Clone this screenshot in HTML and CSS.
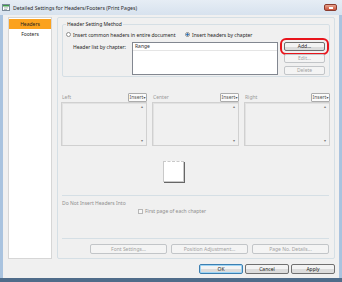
FILE: index.html
```html
<!DOCTYPE html>
<html>
<head>
    <meta charset="UTF-8">
    <title>Detailed Settings for Headers/Footers (Print Pages)</title>
    <link rel="stylesheet" href="styles.css">
</head>
<body>
    <div class="window">
        <div class="titlebar">
            <svg class="app-icon" width="8" height="7" viewBox="0 0 8 7">
                <rect x="0.5" y="0.5" width="7" height="6" fill="#fff" stroke="#7a8a99"/>
                <rect x="1" y="1" width="6" height="1.5" fill="#3f9a4a"/>
                <rect x="2" y="3.5" width="4" height="0.8" fill="#9aa"/>
                <rect x="2" y="5" width="3" height="0.8" fill="#9aa"/>
            </svg>
            <span class="title">Detailed Settings for Headers/Footers (Print Pages)</span>
            <span class="close"><span></span></span>
        </div>
        <div class="frame">
            <div class="client">
                <div class="main">
                    <ul class="nav">
                        <li class="active">Headers</li>
                        <li>Footers</li>
                    </ul>

                    <div class="panel">
                        <fieldset class="method">
                            <legend>Header Setting Method</legend>
                            <div class="radios">
                                <label class="radio"><span class="dot"></span>Insert common headers in entire document</label>
                                <label class="radio checked"><span class="dot"></span>Insert headers by chapter</label>
                            </div>
                            <div class="chapter-row">
                                <span class="chapter-label">Header list by chapter:</span>
                                <div class="listbox">
                                    <div class="list-head">Range</div>
                                </div>
                                <div class="side-buttons">
                                    <button class="btn marked">Add...</button>
                                    <button class="btn" disabled>Edit...</button>
                                    <button class="btn" disabled>Delete</button>
                                </div>
                            </div>
                        </fieldset>

                        <div class="columns">
                            <div class="col">
                                <div class="col-head"><span>Left</span><button class="insert">Insert<i>▾</i></button></div>
                                <div class="textbox"><span class="up">▴</span><span class="down">▾</span></div>
                            </div>
                            <div class="col">
                                <div class="col-head"><span>Center</span><button class="insert">Insert<i>▾</i></button></div>
                                <div class="textbox"><span class="up">▴</span><span class="down">▾</span></div>
                            </div>
                            <div class="col">
                                <div class="col-head"><span>Right</span><button class="insert">Insert<i>▾</i></button></div>
                                <div class="textbox"><span class="up">▴</span><span class="down">▾</span></div>
                            </div>
                        </div>

                        <div class="preview">
                            <div class="page"></div>
                        </div>

                        <div class="sep"></div>

                        <div class="exclude">
                            <div class="exclude-title">Do Not Insert Headers Into</div>
                            <label class="check"><span class="box"></span>First page of each chapter</label>
                        </div>

                        <div class="sep"></div>

                        <div class="detail-buttons">
                            <button class="btn" disabled>Font Settings...</button>
                            <button class="btn" disabled>Position Adjustment...</button>
                            <button class="btn" disabled>Page No. Details...</button>
                        </div>
                    </div>
                </div>

                <div class="footer">
                    <button class="btn default">OK</button>
                    <button class="btn">Cancel</button>
                    <button class="btn">Apply</button>
                </div>
            </div>
        </div>
    </div>
</body>
</html>
```
FILE: styles.css
```css
* {
    box-sizing: border-box;
}
body {
    margin: 0;
    font-family: "Noto Sans", "DejaVu Sans", sans-serif;
    font-size: 5px;
    color: #1e1e1e;
}
.window {
    width: 342px;
    height: 282px;
    display: flex;
    flex-direction: column;
}
.titlebar {
    height: 15px;
    display: flex;
    align-items: center;
    padding-left: 2px;
    background: linear-gradient(#e6edf5, #d7e2ee);
}
.app-icon {
    margin-right: 3px;
}
.title {
    color: #2b2b2b;
    font-size: 5.2px;
}
.close {
    margin-left: auto;
    margin-right: 5px;
    width: 13px;
    height: 7px;
    border: 1px solid #8a3b2e;
    border-radius: 2px;
    background: linear-gradient(#e9a48e, #c9553e);
    display: flex;
    align-items: center;
    justify-content: center;
}
.close span {
    width: 4px;
    height: 2px;
    background: #fff;
}
.frame {
    flex: 1;
    display: flex;
    background: #a9c3df;
    padding: 0 4px 0 3px;
    border-bottom: 4px solid #4f6c8a;
}
.client {
    flex: 1;
    display: flex;
    flex-direction: column;
    background: #f0f0f0;
    padding: 2px 4px 0 5px;
}
.main {
    display: flex;
    gap: 5px;
    height: 242px;
}
.nav {
    width: 44px;
    margin: 0;
    padding: 1px 0 0;
    list-style: none;
    background: #fff;
    border: 1px solid #d6d6d6;
}
.nav li {
    height: 10px;
    line-height: 10px;
    text-align: center;
}
.nav li.active {
    background: #fba21e;
}
.panel {
    flex: 1;
    display: flex;
    flex-direction: column;
    border: 1px solid #d5dfe5;
    border-radius: 2px;
    padding: 3px 4px 4px 3px;
}
.method {
    margin: 0 0 0 1px;
    padding: 0 3px 1px 3px;
    border: 1px solid #d5dfe5;
    border-radius: 2px;
}
.method legend {
    padding: 0 1px;
    line-height: 7px;
}
.radios {
    display: flex;
    margin-top: 3px;
    height: 7px;
    align-items: center;
}
.radio {
    display: flex;
    align-items: center;
    gap: 2px;
    width: 119px;
}
.dot {
    width: 5px;
    height: 5px;
    border-radius: 50%;
    border: 1px solid #8e8f8f;
    background: #fff;
}
.radio.checked .dot {
    background: radial-gradient(circle, #2a6fb7 45%, #fff 60%);
}
.chapter-row {
    display: flex;
    margin-top: 4px;
}
.chapter-label {
    flex: none;
    width: 66px;
    padding-left: 7px;
    margin-top: 2px;
    white-space: nowrap;
}
.listbox {
    width: 146px;
    height: 33px;
    background: #fff;
    border: 1px solid #828790;
}
.list-head {
    height: 8px;
    line-height: 7px;
    padding-left: 2px;
    border-bottom: 1px solid #e5e5e5;
    color: #333;
}
.side-buttons {
    display: flex;
    flex-direction: column;
    gap: 3px;
    margin-left: 6px;
    width: 41px;
}
.btn {
    font-family: inherit;
    font-size: 5px;
    height: 9px;
    padding: 0;
    line-height: 7px;
    color: #1e1e1e;
    border: 1px solid #707070;
    border-radius: 2px;
    background: linear-gradient(#f3f3f3 50%, #dcdcdc 50%);
}
.btn:disabled {
    color: #a3a3a3;
    border-color: #c2c5c8;
    background: #f4f4f4;
}
.btn.marked {
    outline: 2px solid #e8141b;
    outline-offset: 2px;
    border-radius: 2px;
}
.columns {
    display: grid;
    grid-template-columns: 86px 87px 86px;
    gap: 5px;
    margin-top: 15px;
}
.col-head {
    display: flex;
    align-items: center;
    justify-content: space-between;
    height: 10px;
    color: #9a9a9a;
    padding-left: 1px;
}
.insert {
    font-family: inherit;
    font-size: 5px;
    width: 19px;
    height: 9px;
    padding: 0;
    color: #555;
    background: #fbfbfb;
    border: 1px solid #acacac;
    border-radius: 1px;
    line-height: 7px;
}
.insert i {
    font-style: normal;
    font-size: 4px;
}
.textbox {
    height: 44px;
    border: 1px solid #d0d0d0;
    box-shadow: inset 1px 1px 0 #e2e2e2;
    background: #f0f0f0;
    display: flex;
    flex-direction: column;
    align-items: flex-end;
    justify-content: space-between;
    padding: 2px 3px;
    color: #7a7a7a;
    font-size: 4px;
    line-height: 4px;
}
.preview {
    height: 22px;
    margin-top: 15px;
    padding-left: 102px;
}
.page {
    width: 21px;
    height: 21px;
    background: #fff;
    border: 1px solid #c9c9c9;
    border-top: 1px dashed #c9c9c9;
    box-shadow: 1px 1px 0 #666;
}
.sep {
    height: 1px;
    margin: 0 1px 0 1px;
    background: #d5dfe5;
}
.preview + .sep {
    margin-top: 12px;
}
.exclude {
    height: 42px;
    padding: 4px 0 0 1px;
    color: #8f8f8f;
}
.check {
    display: flex;
    align-items: center;
    gap: 2px;
    margin: 2px 0 0 76px;
}
.box {
    width: 5px;
    height: 5px;
    border: 1px solid #b7b7b7;
    background: #f7f7f7;
}
.detail-buttons {
    display: flex;
    justify-content: flex-end;
    gap: 4px;
    margin-top: 5px;
    padding-right: 1px;
}
.detail-buttons .btn {
    width: 77px;
    height: 10px;
}
.footer {
    display: flex;
    justify-content: flex-end;
    gap: 2px;
    margin-top: 5px;
}
.footer .btn {
    width: 44px;
    height: 10px;
}
.footer .btn.default {
    border-color: #3c7fb1;
    box-shadow: inset 0 0 0 1px #9fd5f5;
}
```
